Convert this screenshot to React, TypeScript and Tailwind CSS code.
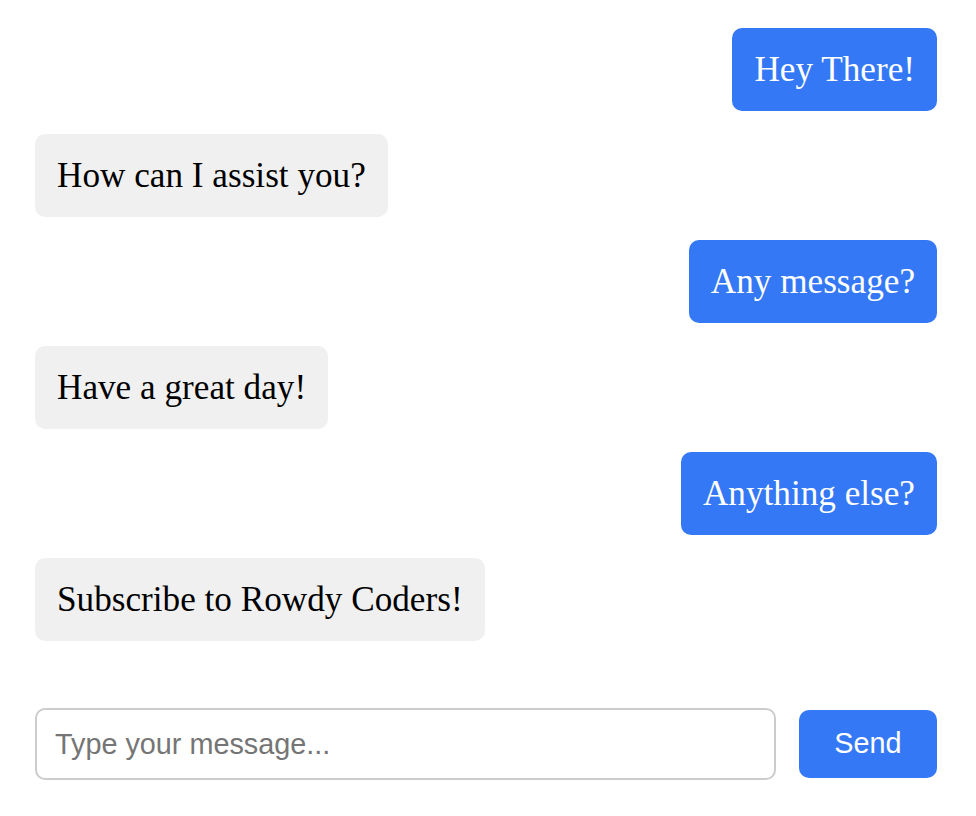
import { useState } from 'react';

type Message = { text: string; sender: 'user' | 'bot' };

const initialMessages: Message[] = [
  { text: 'Hey There!', sender: 'user' },
  { text: 'How can I assist you?', sender: 'bot' },
  { text: 'Any message?', sender: 'user' },
  { text: 'Have a great day!', sender: 'bot' },
  { text: 'Anything else?', sender: 'user' },
  { text: 'Subscribe to Rowdy Coders!', sender: 'bot' },
];

export default function App() {
  const [messages, setMessages] = useState<Message[]>(initialMessages);
  const [input, setInput] = useState('');

  const send = () => {
    if (!input.trim()) return;
    setMessages([...messages, { text: input, sender: 'user' }]);
    setInput('');
  };

  return (
    <div className="min-h-screen bg-white pl-[35px] pr-[39px] pt-[28px]">
      <div className="flex flex-col gap-[23px]">
        {messages.map((m, i) => (
          <div
            key={i}
            className={m.sender === 'user' ? 'flex justify-end' : 'flex justify-start'}
          >
            <div
              className={
                m.sender === 'user'
                  ? 'rounded-[10px] bg-[#3478f6] px-[22px] py-[22px] text-[35.2px] leading-[39px] text-white'
                  : 'rounded-[10px] bg-[#f0f0f0] px-[22px] py-[22px] text-[35.2px] leading-[39px] text-black'
              }
              style={{ fontFamily: '"Liberation Serif", "Times New Roman", serif' }}
            >
              {m.text}
            </div>
          </div>
        ))}
      </div>

      <div
        className="mt-[67px] flex items-center gap-[23px]"
        style={{ fontFamily: '"Liberation Sans", Arial, sans-serif' }}
      >
        <input
          type="text"
          value={input}
          onChange={(e) => setInput(e.target.value)}
          placeholder="Type your message..."
          className="h-[72px] flex-1 rounded-[10px] border-2 border-[#cccccc] px-[18px] text-[28.8px] text-black outline-none placeholder:text-[#757575]"
        />
        <button
          onClick={send}
          className="h-[68px] w-[138px] rounded-[10px] bg-[#3478f6] text-[28.8px] text-white"
        >
          Send
        </button>
      </div>
    </div>
  );
}
